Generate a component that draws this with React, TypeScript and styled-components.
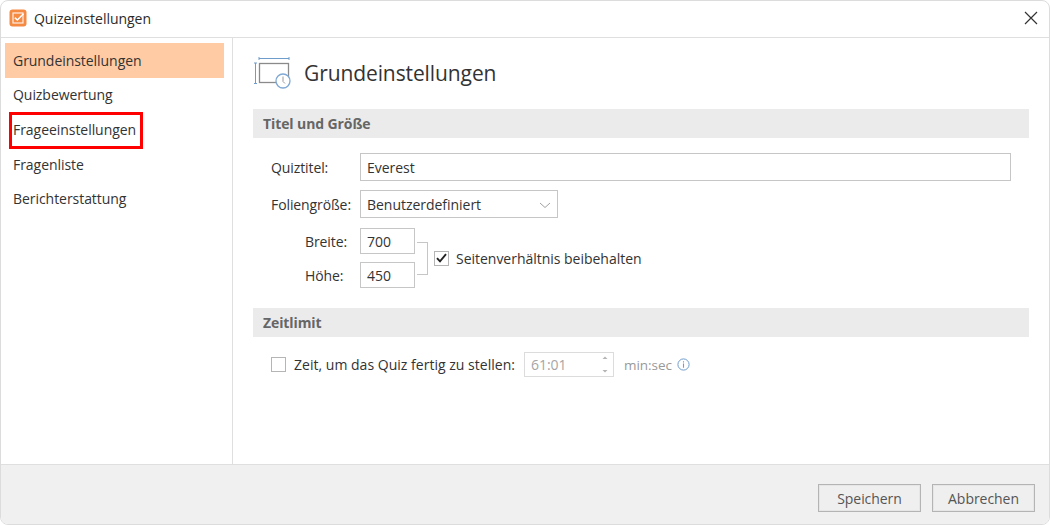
import React from "react";
import styled, { createGlobalStyle } from "styled-components";

const Global = createGlobalStyle`
  html, body { margin: 0; padding: 0; background: #fff; }
  body { font-family: "Open Sans", "Noto Sans", "Liberation Sans", sans-serif; color: #333; }
`;

const Dialog = styled.div`
  width: 1050px; height: 525px; box-sizing: border-box;
  border: 1px solid #dcdcdc; border-radius: 8px; overflow: hidden;
  display: flex; flex-direction: column; background: #fff;
`;
const TitleBar = styled.header`
  height: 37px; flex: none; box-sizing: border-box; border-bottom: 1px solid #dfdfdf;
  display: flex; align-items: center; padding: 0 11px 2px 8px; gap: 7px;
`;
const TitleText = styled.span`
  font-size: 14px; color: #2b2b2b; flex: 1; letter-spacing: -0.02px;
`;
const Body = styled.div`
  flex: 1; display: flex; min-height: 0;
`;
const Sidebar = styled.nav`
  width: 232px; flex: none; box-sizing: border-box; border-right: 1px solid #dfdfdf;
  padding: 5px 8px 0 4px; display: flex; flex-direction: column;
`;
const NavItem = styled.div<{ $active?: boolean }>`
  height: 34.6px; flex: none; display: flex; align-items: center; padding-left: 8px;
  font-size: 14px; color: #333; position: relative; letter-spacing: -0.05px;
  background: ${(p) => (p.$active ? "#ffcba4" : "transparent")};
`;
const Highlight = styled.span`
  position: absolute; left: 4px; top: 0; width: 134px; height: 37px; box-sizing: border-box;
  border: 3px solid #f00;
`;
const Main = styled.main`
  flex: 1; padding: 16px 20px 0 20px; display: flex; flex-direction: column; min-width: 0;
`;
const Heading = styled.div`
  display: flex; align-items: center; gap: 13px; height: 38px; margin-bottom: 17px;
  margin-left: 1px;
`;
const HeadingText = styled.h1`
  margin: 0; font-size: 21px; font-weight: 400; color: #333; letter-spacing: -0.1px;
`;
const SectionBar = styled.div`
  height: 29px; flex: none; background: #ebebeb; display: flex; align-items: center; padding-left: 10px;
  font-size: 14px; font-weight: 700; color: #666; letter-spacing: -0.1px;
`;
const Form = styled.div`
  padding-top: 15px; display: flex; flex-direction: column; height: 170px; flex: none; box-sizing: border-box;
`;
const Row = styled.div`
  display: flex; align-items: center; margin-bottom: 9px;
`;
const Label = styled.label`
  box-sizing: border-box; font-size: 14px; color: #333; flex: none; width: 107px;
  letter-spacing: -0.1px; margin-top: 1px;
`;
const FieldLabel = styled(Label)`
  padding-left: 18px;
`;
const SizeLabel = styled(Label)`
  padding-left: 52px;
`;
const TextField = styled.div<{ $width: number; $height?: number; $muted?: boolean }>`
  width: ${(p) => p.$width}px; height: ${(p) => p.$height ?? 28}px; box-sizing: border-box;
  border: 1px solid ${(p) => (p.$muted ? "#dcdcdc" : "#c6c6c6")};
  display: flex; align-items: center; padding: 0 6px 0 6px; font-size: 14px; letter-spacing: -0.03px;
  color: ${(p) => (p.$muted ? "#a5a5a5" : "#333")}; position: relative; background: #fff;
`;
const Chevron = styled.svg`
  position: absolute; right: 6px; top: 11px;
`;
const SizeGroup = styled.div`
  display: flex; align-items: center; margin-top: 1px;
`;
const SizeColumn = styled.div`
  display: flex; flex-direction: column; gap: 8px;
`;
const SizeRow = styled.div`
  display: flex; align-items: center;
`;
const Bracket = styled.div`
  width: 11px; height: 33px; box-sizing: border-box; border: 1px solid #c6c6c6; border-left: 0; margin: 0 6px 0 2px;
`;
const CheckLabel = styled.span`
  font-size: 14px; color: #333; letter-spacing: -0.02px;
`;
const TimeLabel = styled(CheckLabel)`
  letter-spacing: 0.02px; margin-left: 1px;
`;
const CheckBox = styled.span`
  width: 15px; height: 15px; flex: none; box-sizing: border-box; border: 1px solid #b5b5b5;
  display: flex; align-items: center; justify-content: center; background: #fff; margin-right: 7px;
`;
const TimeRow = styled.div`
  display: flex; align-items: center; margin-top: 15px; padding-left: 18px;
`;
const TimeField = styled(TextField)`
  margin: 0 10px 0 9px;
`;
const Spinner = styled.svg`
  position: absolute; right: 4px; top: 2px;
`;
const Muted = styled.span`
  font-size: 13.5px; color: #999; letter-spacing: -0.03px; margin-right: 5px;
`;
const Footer = styled.footer`
  height: 60px; flex: none; box-sizing: border-box; background: #f0f0f0; border-top: 1px solid #dfdfdf;
  display: flex; justify-content: flex-end; align-items: flex-start; gap: 11px; padding: 19px 14px 0 0;
`;
const Button = styled.button`
  width: 103px; height: 28px; box-sizing: border-box; padding: 0; background: #efefef;
  border: 1px solid #b4b4b4; box-shadow: inset 0 0 0 1px #e6e6e6;
  font-family: inherit; font-size: 14px; color: #555; letter-spacing: -0.05px;
`;

const AppIcon = () => (
  <svg width="18" height="18" viewBox="0 0 18 18">
    <rect x="0.5" y="0.5" width="17" height="17" rx="3" fill="#f58a42" />
    <rect x="4" y="4" width="10" height="10" fill="none" stroke="#fff" strokeOpacity="0.85" strokeWidth="1.2" />
    <path d="M5.8 8.6 L8.4 11 L14.5 4.8" fill="none" stroke="#fff" strokeWidth="1.5" />
  </svg>
);
const CloseIcon = () => (
  <svg width="14" height="14" viewBox="0 0 14 14">
    <path d="M1 1 L13 13 M13 1 L1 13" stroke="#333" strokeWidth="1.2" fill="none" />
  </svg>
);
const SlideIcon = () => (
  <svg width="37" height="33" viewBox="0 0 37 33">
    <g stroke="#6f9ccb" strokeWidth="1" fill="none">
      <path d="M5 1.5 H35 M5 0 V3 M35 0 V3" />
      <path d="M1.5 6 V26.5 M0 6 H3 M0 26.5 H3" />
    </g>
    <rect x="5.5" y="6.5" width="29" height="19" fill="#fff" stroke="#8a8a8a" strokeWidth="1.3" />
    <circle cx="29" cy="24" r="7" fill="#fff" stroke="#7fa8d4" strokeWidth="1.3" />
    <path d="M29 19.5 V24.5 L31 26.5" fill="none" stroke="#9a9a9a" strokeWidth="1" />
  </svg>
);
const CheckMark = () => (
  <svg width="11" height="10" viewBox="0 0 11 10">
    <path d="M1 5.2 L4 8.4 L10 1.2" fill="none" stroke="#222" strokeWidth="1.9" />
  </svg>
);
const InfoIcon = () => (
  <svg width="13" height="13" viewBox="0 0 13 13">
    <circle cx="6.5" cy="6.5" r="5.6" fill="none" stroke="#6f9ccb" strokeWidth="1" />
    <path d="M6.5 5.6 V9.8 M6.5 3.2 V4.4" stroke="#6f9ccb" strokeWidth="1.1" />
  </svg>
);

export default function App() {
  return (
    <>
      <Global />
      <Dialog>
        <TitleBar>
          <AppIcon />
          <TitleText>Quizeinstellungen</TitleText>
          <CloseIcon />
        </TitleBar>
        <Body>
          <Sidebar>
            <NavItem $active>Grundeinstellungen</NavItem>
            <NavItem>Quizbewertung</NavItem>
            <NavItem>
              Frageeinstellungen
              <Highlight />
            </NavItem>
            <NavItem>Fragenliste</NavItem>
            <NavItem>Berichterstattung</NavItem>
          </Sidebar>
          <Main>
            <Heading>
              <SlideIcon />
              <HeadingText>Grundeinstellungen</HeadingText>
            </Heading>
            <SectionBar>Titel und Größe</SectionBar>
            <Form>
              <Row>
                <FieldLabel>Quiztitel:</FieldLabel>
                <TextField $width={651}>Everest</TextField>
              </Row>
              <Row>
                <FieldLabel>Foliengröße:</FieldLabel>
                <TextField $width={198}>
                  Benutzerdefiniert
                  <Chevron width="12" height="7" viewBox="0 0 12 7">
                    <path d="M1 1 L6 5.5 L11 1" fill="none" stroke="#a0a0a0" strokeWidth="1" />
                  </Chevron>
                </TextField>
              </Row>
              <SizeGroup>
                <SizeColumn>
                  <SizeRow>
                    <SizeLabel>Breite:</SizeLabel>
                    <TextField $width={55} $height={26}>700</TextField>
                  </SizeRow>
                  <SizeRow>
                    <SizeLabel>Höhe:</SizeLabel>
                    <TextField $width={55} $height={26}>450</TextField>
                  </SizeRow>
                </SizeColumn>
                <Bracket />
                <CheckBox>
                  <CheckMark />
                </CheckBox>
                <CheckLabel>Seitenverhältnis beibehalten</CheckLabel>
              </SizeGroup>
            </Form>
            <SectionBar>Zeitlimit</SectionBar>
            <TimeRow>
              <CheckBox />
              <TimeLabel>Zeit, um das Quiz fertig zu stellen:</TimeLabel>
              <TimeField $width={90} $height={25} $muted>
                61:01
                <Spinner width="8" height="20" viewBox="0 0 8 20">
                  <path d="M1.5 4 L4 1.5 L6.5 4 Z M1.5 15 L4 17.5 L6.5 15 Z" fill="#b5b5b5" />
                </Spinner>
              </TimeField>
              <Muted>min:sec</Muted>
              <InfoIcon />
            </TimeRow>
          </Main>
        </Body>
        <Footer>
          <Button>Speichern</Button>
          <Button>Abbrechen</Button>
        </Footer>
      </Dialog>
    </>
  );
}
